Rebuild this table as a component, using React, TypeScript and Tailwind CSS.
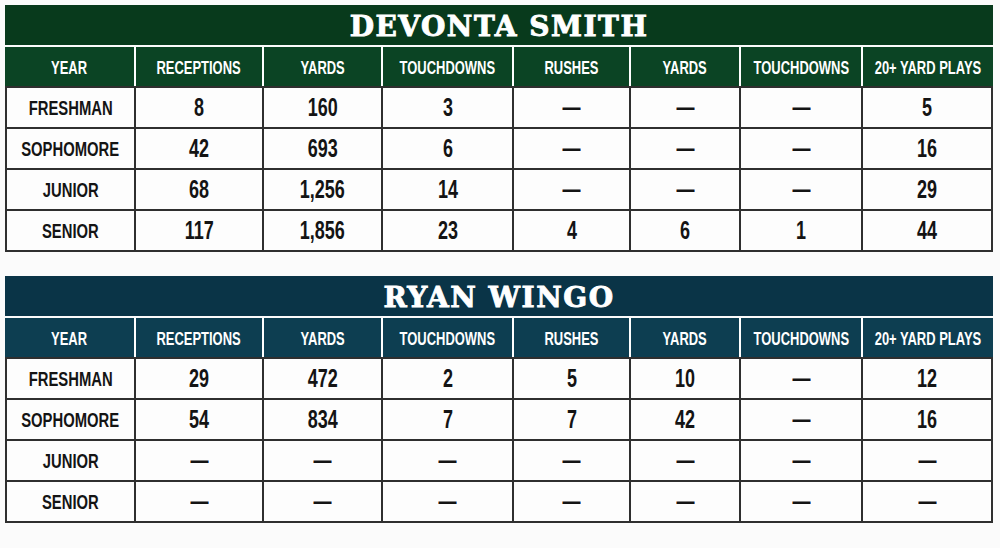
import React from "react";

type Row = { year: string; vals: string[] };

const D = "—";

const smith: Row[] = [
  { year: "FRESHMAN", vals: ["8", "160", "3", D, D, D, "5"] },
  { year: "SOPHOMORE", vals: ["42", "693", "6", D, D, D, "16"] },
  { year: "JUNIOR", vals: ["68", "1,256", "14", D, D, D, "29"] },
  { year: "SENIOR", vals: ["117", "1,856", "23", "4", "6", "1", "44"] },
];

const wingo: Row[] = [
  { year: "FRESHMAN", vals: ["29", "472", "2", "5", "10", D, "12"] },
  { year: "SOPHOMORE", vals: ["54", "834", "7", "7", "42", D, "16"] },
  { year: "JUNIOR", vals: [D, D, D, D, D, D, D] },
  { year: "SENIOR", vals: [D, D, D, D, D, D, D] },
];

const headers = [
  "YEAR",
  "RECEPTIONS",
  "YARDS",
  "TOUCHDOWNS",
  "RUSHES",
  "YARDS",
  "TOUCHDOWNS",
  "20+ YARD PLAYS",
];

const sans = "font-['Liberation_Sans',Arial,sans-serif]";

function StatTable({
  name,
  rows,
  titleBg,
  headBg,
}: {
  name: string;
  rows: Row[];
  titleBg: string;
  headBg: string;
}) {
  return (
    <div className="w-[988px] flex flex-col">
      <div
        className={`h-[40px] ${titleBg} flex items-center justify-center pt-[3px] text-white font-['DejaVu_Serif',serif] font-bold text-[28px] tracking-[1.5px] leading-none [-webkit-text-stroke:0.9px_white]`}
      >
        {name}
      </div>
      <div className="h-[2px]" />
      <div className="grid grid-cols-[129px_126px_117px_129px_115px_108px_120px_130px] gap-x-[2px] bg-white">
        {headers.map((h, i) => (
          <div
            key={i}
            className={`h-[39px] ${headBg} flex items-center justify-center pt-[2px] overflow-hidden`}
          >
            <span
              className={`inline-block whitespace-nowrap text-white ${sans} font-bold text-[18px] leading-none scale-x-[0.72]`}
            >
              {h}
            </span>
          </div>
        ))}
      </div>
      <div className="border-2 border-[#2f2f2f] bg-[#2f2f2f] grid grid-cols-[127px_126px_117px_129px_115px_108px_120px_128px] gap-[2px]">
        {rows.map((r) => (
          <React.Fragment key={r.year}>
            <div className="h-[39px] bg-[#fdfdfd] flex items-center justify-center">
              <span
                className={`inline-block whitespace-nowrap text-[#141414] ${sans} font-bold text-[20px] leading-none scale-x-[0.74]`}
              >
                {r.year}
              </span>
            </div>
            {r.vals.map((v, i) => (
              <div
                key={i}
                className="h-[39px] bg-[#fdfdfd] flex items-center justify-center"
              >
                <span
                  className={`inline-block whitespace-nowrap text-[#141414] ${sans} font-bold text-[25px] leading-none scale-x-[0.72]`}
                >
                  {v}
                </span>
              </div>
            ))}
          </React.Fragment>
        ))}
      </div>
    </div>
  );
}

export default function App() {
  return (
    <div className="w-[1000px] h-[548px] bg-[#fbfbfb] flex flex-col pl-[5px] pt-[5px] gap-[24px]">
      <StatTable
        name="DEVONTA SMITH"
        rows={smith}
        titleBg="bg-[#083a1c]"
        headBg="bg-[#0b4424]"
      />
      <StatTable
        name="RYAN WINGO"
        rows={wingo}
        titleBg="bg-[#0a3447]"
        headBg="bg-[#0d3e51]"
      />
    </div>
  );
}
